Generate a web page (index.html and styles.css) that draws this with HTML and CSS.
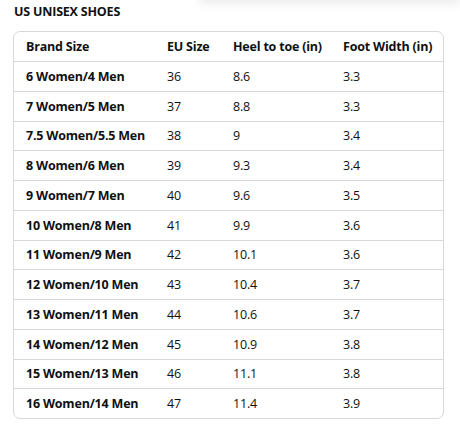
FILE: index.html
```html
<!DOCTYPE html>
<html lang="en">
<head>
    <meta charset="UTF-8">
    <meta name="viewport" content="width=device-width, initial-scale=1.0">
    <title>US Unisex Shoes</title>
    <link rel="stylesheet" href="styles.css">
</head>
<body>
    <div class="shade"></div>
    <h2 class="title">US UNISEX SHOES</h2>
    <div class="table-wrap">
        <table class="size-table">
            <thead>
                <tr>
                    <th>Brand Size</th>
                    <th>EU Size</th>
                    <th>Heel to toe (in)</th>
                    <th>Foot Width (in)</th>
                </tr>
            </thead>
            <tbody>
                <tr><td>6 Women/4 Men</td><td>36</td><td>8.6</td><td>3.3</td></tr>
                <tr><td>7 Women/5 Men</td><td>37</td><td>8.8</td><td>3.3</td></tr>
                <tr><td>7.5 Women/5.5 Men</td><td>38</td><td>9</td><td>3.4</td></tr>
                <tr><td>8 Women/6 Men</td><td>39</td><td>9.3</td><td>3.4</td></tr>
                <tr><td>9 Women/7 Men</td><td>40</td><td>9.6</td><td>3.5</td></tr>
                <tr><td>10 Women/8 Men</td><td>41</td><td>9.9</td><td>3.6</td></tr>
                <tr><td>11 Women/9 Men</td><td>42</td><td>10.1</td><td>3.6</td></tr>
                <tr><td>12 Women/10 Men</td><td>43</td><td>10.4</td><td>3.7</td></tr>
                <tr><td>13 Women/11 Men</td><td>44</td><td>10.6</td><td>3.7</td></tr>
                <tr><td>14 Women/12 Men</td><td>45</td><td>10.9</td><td>3.8</td></tr>
                <tr><td>15 Women/13 Men</td><td>46</td><td>11.1</td><td>3.8</td></tr>
                <tr><td>16 Women/14 Men</td><td>47</td><td>11.4</td><td>3.9</td></tr>
            </tbody>
        </table>
    </div>
</body>
</html>
```

FILE: styles.css
```css
body {
    font-family: "Open Sans", Arial, sans-serif;
    background-color: #ffffff;
    color: #0f1111;
    margin: 0;
    padding: 3px 16px 0 13px;
    position: relative;
}
.shade {
    position: absolute;
    top: -6px;
    left: 200px;
    right: 0;
    height: 10px;
    background: #ececec;
    filter: blur(4px);
}
.title {
    font-size: 12.5px;
    font-weight: 700;
    margin: 0 0 10px 1px;
    line-height: 18px;
    letter-spacing: -0.2px;
}
.table-wrap {
    border: 1px solid #d5d9d9;
    border-radius: 7px;
    overflow: hidden;
}
.size-table {
    width: 100%;
    border-collapse: collapse;
    font-size: 12.5px;
    letter-spacing: -0.2px;
}
.size-table th,
.size-table td {
    text-align: left;
    padding: 0 0 0 12px;
    height: 28.75px;
    white-space: nowrap;
}
.size-table th {
    font-weight: 700;
    height: 29px;
}
.size-table td:first-child {
    font-weight: 700;
}
.size-table tr {
    border-bottom: 1px solid #d5d9d9;
}
.size-table tbody tr:last-child {
    border-bottom: none;
}
.size-table th:nth-child(1) { width: 129px; }
.size-table th:nth-child(2) { width: 54px; }
.size-table th:nth-child(3) { width: 98px; }
```
